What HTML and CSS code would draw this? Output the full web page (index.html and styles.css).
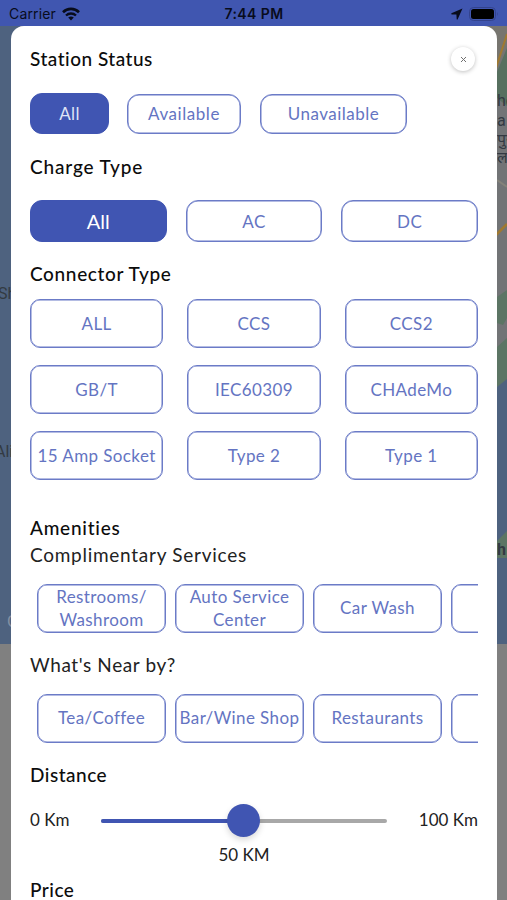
FILE: index.html
```
<!DOCTYPE html>
<html lang="en">
<head>
    <meta charset="UTF-8">
    <meta name="viewport" content="width=device-width, initial-scale=1.0">
    <title>Station Filters</title>
    <link rel="stylesheet" href="styles.css">
</head>
<body>
    <!-- Dimmed map behind the sheet -->
    <svg class="map" width="507" height="900" viewBox="0 0 507 900">
        <rect width="507" height="900" fill="#808080"/>
        <rect width="20" height="644" fill="#4e627f"/>
        <rect x="480" width="27" height="644" fill="#727476"/>
        <path d="M507 48L497 72V98L507 106Z" fill="#57705f"/>
        <path d="M480 26H507V46L497 70H480Z" fill="#77756f"/>
        <path d="M507 34L496 68" stroke="#a07930" stroke-width="2"/>
        <path d="M497 180L507 187" stroke="#85837a" stroke-width="2"/>
        <path d="M496 235L507 224" stroke="#a07930" stroke-width="2.5"/>
        <path d="M497 297L507 290V318L503 325L497 323Z" fill="#5c7564"/>
        <path d="M497 347L507 338V380L497 387Z" fill="#5c7564"/>
        <path d="M497 387L507 379V644H497Z" fill="#4e627f"/>
        <path d="M497 541L507 531V558H497Z" fill="#5c7564"/>
        <g class="map-labels">
            <text x="-2" y="299">Sh</text>
            <text x="-5" y="457">Ali</text>
            <text x="497" y="106">he</text>
            <text x="497" y="126">a</text>
            <text x="497" y="145">पुर</text>
            <text x="497" y="163">ल</text>
            <text x="497" y="555" font-weight="bold">h</text>
            <text x="7" y="627" fill="#8490a3">G</text>
        </g>
    </svg>

    <header class="status-bar">
        <div class="carrier">
            <span>Carrier</span>
            <svg width="18" height="14" viewBox="0 0 18 14">
                <path d="M1 5.2A11.4 11.4 0 0 1 17 5.2" fill="none" stroke="#080c1c" stroke-width="2.6"/>
                <path d="M4 8.5A7.2 7.2 0 0 1 14 8.5" fill="none" stroke="#080c1c" stroke-width="2.3"/>
                <path d="M6.2 10.5Q9 8.3 11.8 10.5L9 13.4Z" fill="#080c1c"/>
            </svg>
        </div>
        <div class="clock">7:44 PM</div>
        <div class="indicators">
            <svg width="12" height="12" viewBox="0 0 12 12">
                <path d="M11.5.5L.4 5.3Q0 6 .7 6.4L5.4 6.6 5.7 11.3Q6 12 6.7 11.3Z" fill="#080c1c"/>
            </svg>
            <svg width="30" height="14" viewBox="0 0 30 14">
                <rect x=".5" y=".5" width="26" height="13" rx="4" fill="none" stroke="#33438d"/>
                <rect x="2" y="2" width="23" height="10" rx="2.5" fill="#000"/>
                <path d="M28 5Q29.5 7 28 9Z" fill="#33438d"/>
            </svg>
        </div>
    </header>

    <main class="sheet">
        <div class="sheet-top">
            <h2>Station Status</h2>
            <button class="close" aria-label="Close">
                <svg width="7" height="7" viewBox="0 0 7 7"><path d="M1 1L6 6M6 1L1 6" stroke="#707070"/></svg>
            </button>
        </div>
        <div class="status-row">
            <button class="btn all active">All</button>
            <button class="btn available">Available</button>
            <button class="btn unavailable">Unavailable</button>
        </div>

        <h2 class="wide">Charge Type</h2>
        <div class="charge-row">
            <button class="btn active big">All</button>
            <button class="btn">AC</button>
            <button class="btn">DC</button>
        </div>

        <h2 class="connector-title">Connector Type</h2>
        <div class="connector-grid">
            <button class="btn">ALL</button>
            <button class="btn">CCS</button>
            <button class="btn">CCS2</button>
            <button class="btn">GB/T</button>
            <button class="btn">IEC60309</button>
            <button class="btn">CHAdeMo</button>
            <button class="btn">15 Amp Socket</button>
            <button class="btn">Type 2</button>
            <button class="btn">Type 1</button>
        </div>

        <h2 class="amenities-title">Amenities</h2>
        <h3>Complimentary Services</h3>
        <div class="scroller">
            <button class="btn">Restrooms/<br>Washroom</button>
            <button class="btn">Auto Service<br>Center</button>
            <button class="btn">Car Wash</button>
            <button class="btn"></button>
        </div>
        <h3 class="near">What's Near by?</h3>
        <div class="scroller last">
            <button class="btn">Tea/Coffee</button>
            <button class="btn">Bar/Wine Shop</button>
            <button class="btn">Restaurants</button>
            <button class="btn"></button>
        </div>

        <h2>Distance</h2>
        <div class="distance">
            <span class="min">0 Km</span>
            <div class="track"><div class="fill" style="width: 50%"></div><div class="thumb"></div></div>
            <span class="max">100 Km</span>
        </div>
        <p class="value">50 KM</p>

        <h2>Price</h2>
    </main>
</body>
</html>
```
FILE: styles.css
```
* { box-sizing: border-box; }

body {
    margin: 0;
    height: 900px;
    overflow: hidden;
    background: #808080;
    font-family: Lato, "Liberation Sans", sans-serif;
    color: #111;
}

.map {
    position: absolute;
    top: 0;
    left: 0;
    z-index: -1;
}

.map-labels {
    font: 16px Roboto, "Noto Sans", sans-serif;
    fill: #333a42;
}

.status-bar {
    height: 26px;
    padding: 1px 8px 0 9px;
    display: grid;
    grid-template-columns: 1fr auto 1fr;
    align-items: center;
    background: #4056b0;
    color: #080c1c;
    font: 14px/25px Inter, sans-serif;
}

.carrier, .indicators {
    display: flex;
    align-items: center;
    gap: 6px;
}

.carrier span { letter-spacing: 0.15px; }
.clock { font-weight: 600; letter-spacing: 0.4px; }
.indicators { justify-content: flex-end; }

.sheet {
    height: 900px;
    margin: 0 10px 0 11px;
    padding: 20px 19px 0;
    background: #fff;
    border-radius: 13px 13px 0 0;
}

h2, h3 {
    margin: 0;
    height: 26px;
    font-size: 19px;
    line-height: 26px;
    font-weight: 500;
    letter-spacing: 0.5px;
    color: #0c0c0c;
}

h2.wide { letter-spacing: 0.85px; }
h2.connector-title { line-height: 24px; letter-spacing: 0.65px; }
h2.amenities-title { letter-spacing: 0.75px; }

h3 {
    line-height: 28px;
    font-weight: 400;
    letter-spacing: 0.73px;
    color: #222;
}

h3.near { letter-spacing: 0.6px; }

.sheet-top {
    display: flex;
    justify-content: space-between;
}

.close {
    width: 24px;
    height: 24px;
    margin: 1px 3px 0 0;
    padding: 0;
    display: flex;
    align-items: center;
    justify-content: center;
    border: none;
    border-radius: 50%;
    background: #fff;
    box-shadow: 0 1px 4px rgba(0, 0, 0, 0.25);
}

.btn {
    padding: 0;
    border: 1px solid #6b7bc7;
    border-radius: 10px;
    background: #fff;
    box-shadow: inset 0 0 0 0.5px #6b7bc7;
    color: #6474c2;
    font: 17px/23px Lato, sans-serif;
    letter-spacing: 0.4px;
    white-space: nowrap;
}

.btn.active {
    border-color: #4055b2;
    background: #4055b2;
    box-shadow: none;
    color: #dfe3f6;
}

.btn.big { font-size: 20px; letter-spacing: 0; color: #fff; }

.status-row {
    display: flex;
    align-items: center;
    height: 41px;
    margin: 21px 0 20px;
}

.status-row .btn { height: 40px; border-radius: 12px; padding-bottom: 1px; }
.status-row .all { width: 79px; height: 41px; margin-right: 18px; }
.status-row .available { width: 114px; margin-right: 19px; letter-spacing: 0.55px; }
.status-row .unavailable { width: 147px; letter-spacing: 0.5px; }

.charge-row {
    display: grid;
    grid-template-columns: repeat(3, 1fr);
    gap: 19px;
    margin: 20px 0;
}

.charge-row .btn { height: 42px; border-radius: 12px; }

.connector-grid {
    display: grid;
    grid-template-columns: repeat(3, 1fr);
    gap: 17px 24px;
    margin: 11px 0 35px;
}

.connector-grid .btn { height: 49px; }

.scroller {
    display: flex;
    gap: 9px;
    margin: 17px 0 18px;
    padding-left: 7px;
    overflow: hidden;
}

.scroller.last { margin-bottom: 19px; }

.scroller .btn {
    flex: 0 0 129px;
    height: 49px;
    padding-bottom: 2px;
}

.distance {
    display: flex;
    align-items: center;
    justify-content: space-between;
    height: 34px;
    margin-top: 14px;
    font-size: 17px;
    color: #222;
}

.track {
    position: relative;
    width: 286px;
    height: 4px;
    margin-top: 3px;
    border-radius: 2px;
    background: #a8a8a8;
}

.fill {
    height: 4px;
    border-radius: 2px;
    background: #4055b2;
}

/* Thumb sits over the middle of the track */
.thumb {
    position: absolute;
    top: -15px;
    left: calc(50% - 17px);
    width: 33px;
    height: 33px;
    border-radius: 50%;
    background: #4055b2;
    box-shadow: 0 3px 6px rgba(0, 0, 0, 0.15);
}

.value {
    margin: 5px 0 9px;
    padding-right: 20px;
    text-align: center;
    font-size: 17px;
    line-height: 27px;
    color: #222;
}
```
